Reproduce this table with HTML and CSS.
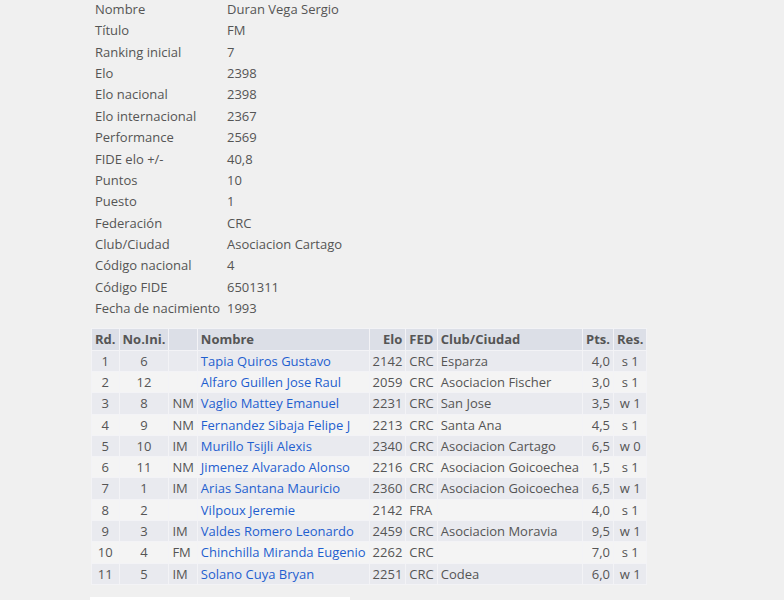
FILE: index.html
```html
<!DOCTYPE html>
<html lang="es">
<head>
<meta charset="utf-8">
<link rel="stylesheet" href="styles.css">
</head>
<body>
<div class="page">
  <div class="info">
    <div class="lbl">Nombre</div><div>Duran Vega Sergio</div>
    <div class="lbl">Título</div><div>FM</div>
    <div class="lbl">Ranking inicial</div><div>7</div>
    <div class="lbl">Elo</div><div>2398</div>
    <div class="lbl">Elo nacional</div><div>2398</div>
    <div class="lbl">Elo internacional</div><div>2367</div>
    <div class="lbl">Performance</div><div>2569</div>
    <div class="lbl">FIDE elo +/-</div><div>40,8</div>
    <div class="lbl">Puntos</div><div>10</div>
    <div class="lbl">Puesto</div><div>1</div>
    <div class="lbl">Federación</div><div>CRC</div>
    <div class="lbl">Club/Ciudad</div><div>Asociacion Cartago</div>
    <div class="lbl">Código nacional</div><div>4</div>
    <div class="lbl">Código FIDE</div><div>6501311</div>
    <div class="lbl">Fecha de nacimiento</div><div>1993</div>
  </div>
  <table class="games">
    <thead>
      <tr><th class="c">Rd.</th><th class="c">No.Ini.</th><th></th><th class="l">Nombre</th><th class="r">Elo</th><th class="l">FED</th><th class="l">Club/Ciudad</th><th class="r">Pts.</th><th class="c">Res.</th></tr>
    </thead>
    <tbody>
      <tr><td class="c">1</td><td class="c">6</td><td></td><td><a href="#">Tapia Quiros Gustavo</a></td><td class="r">2142</td><td>CRC</td><td>Esparza</td><td class="r">4,0</td><td class="c">s 1</td></tr>
      <tr><td class="c">2</td><td class="c">12</td><td></td><td><a href="#">Alfaro Guillen Jose Raul</a></td><td class="r">2059</td><td>CRC</td><td>Asociacion Fischer</td><td class="r">3,0</td><td class="c">s 1</td></tr>
      <tr><td class="c">3</td><td class="c">8</td><td>NM</td><td><a href="#">Vaglio Mattey Emanuel</a></td><td class="r">2231</td><td>CRC</td><td>San Jose</td><td class="r">3,5</td><td class="c">w 1</td></tr>
      <tr><td class="c">4</td><td class="c">9</td><td>NM</td><td><a href="#">Fernandez Sibaja Felipe J</a></td><td class="r">2213</td><td>CRC</td><td>Santa Ana</td><td class="r">4,5</td><td class="c">s 1</td></tr>
      <tr><td class="c">5</td><td class="c">10</td><td>IM</td><td><a href="#">Murillo Tsijli Alexis</a></td><td class="r">2340</td><td>CRC</td><td>Asociacion Cartago</td><td class="r">6,5</td><td class="c">w 0</td></tr>
      <tr><td class="c">6</td><td class="c">11</td><td>NM</td><td><a href="#">Jimenez Alvarado Alonso</a></td><td class="r">2216</td><td>CRC</td><td>Asociacion Goicoechea</td><td class="r">1,5</td><td class="c">s 1</td></tr>
      <tr><td class="c">7</td><td class="c">1</td><td>IM</td><td><a href="#">Arias Santana Mauricio</a></td><td class="r">2360</td><td>CRC</td><td>Asociacion Goicoechea</td><td class="r">6,5</td><td class="c">w 1</td></tr>
      <tr><td class="c">8</td><td class="c">2</td><td></td><td><a href="#">Vilpoux Jeremie</a></td><td class="r">2142</td><td>FRA</td><td></td><td class="r">4,0</td><td class="c">s 1</td></tr>
      <tr><td class="c">9</td><td class="c">3</td><td>IM</td><td><a href="#">Valdes Romero Leonardo</a></td><td class="r">2459</td><td>CRC</td><td>Asociacion Moravia</td><td class="r">9,5</td><td class="c">w 1</td></tr>
      <tr><td class="c">10</td><td class="c">4</td><td>FM</td><td><a href="#">Chinchilla Miranda Eugenio</a></td><td class="r">2262</td><td>CRC</td><td></td><td class="r">7,0</td><td class="c">s 1</td></tr>
      <tr><td class="c">11</td><td class="c">5</td><td>IM</td><td><a href="#">Solano Cuya Bryan</a></td><td class="r">2251</td><td>CRC</td><td>Codea</td><td class="r">6,0</td><td class="c">w 1</td></tr>
    </tbody>
  </table>
  <div class="next"></div>
</div>
</body>
</html>
```
FILE: styles.css
```css
html, body {
  margin: 0;
  padding: 0;
  background: #f0f0f0;
}
body {
  font-family: "Open Sans", "Noto Sans", sans-serif;
  font-size: 13px;
  color: #555555;
}
.page {
  padding-left: 91px;
}
.info {
  display: grid;
  grid-template-columns: 132px auto;
  line-height: 21.36px;
  padding-left: 4px;
  margin-top: -1px;
}
.games {
  margin-top: 9px;
  border-collapse: separate;
  border-spacing: 1px;
  background: #f3f3f6;
  line-height: 20.3px;
}
.games th {
  background: #dcdfe7;
  font-weight: 700;
  padding: 0 3px;
  text-align: left;
}
.games td {
  padding: 0 3px;
  white-space: nowrap;
}
.games tbody tr:nth-child(odd) td { background: #e9eaef; }
.games tbody tr:nth-child(even) td { background: #f4f4f4; }
.c { text-align: center !important; }
.r { text-align: right !important; }
.l { text-align: left; }
.games a {
  color: #1f5fcf;
  text-decoration: none;
}
.next {
  margin-top: 12px;
  margin-left: -1px;
  width: 260px;
  height: 4px;
  background: #ffffff;
}
```
